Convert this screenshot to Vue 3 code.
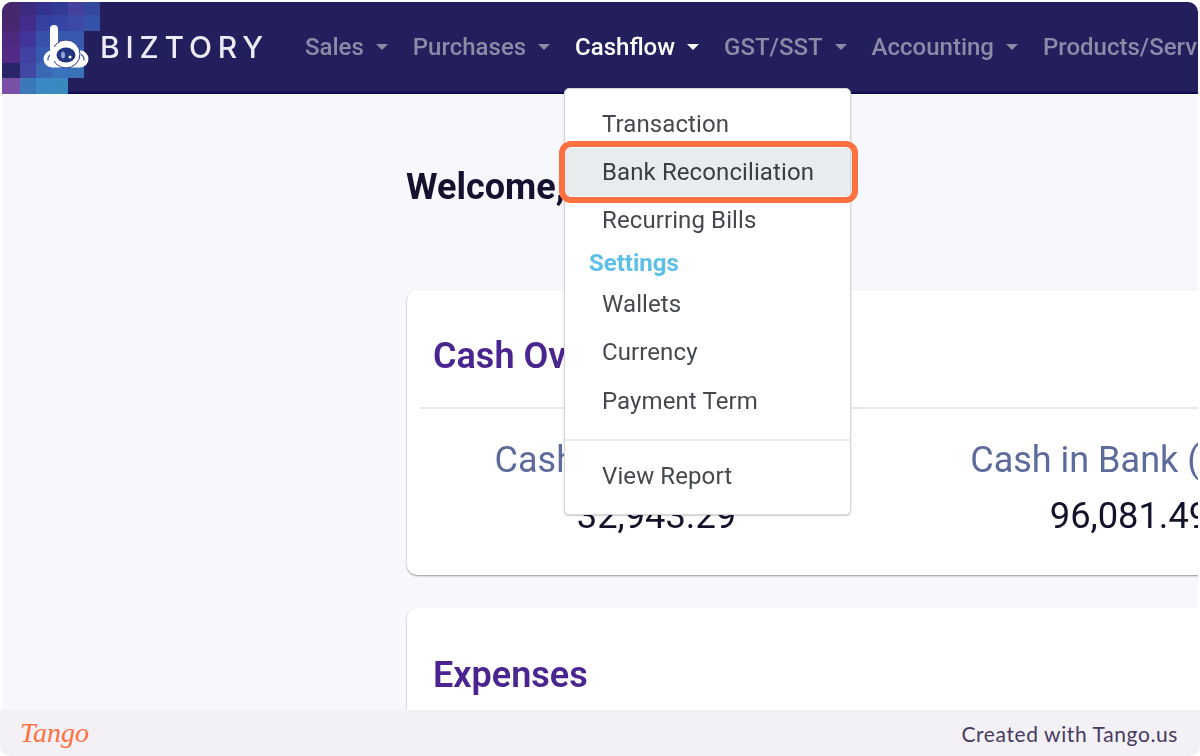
<template>
  <div class="page">
    <div class="shot">
      <header class="topbar">
        <svg class="mosaic" width="98" height="92" viewBox="0 0 98 92">
          <rect v-for="(c, i) in mosaic" :key="i" :x="c.x" :y="c.y" :width="c.w" :height="c.h" :fill="c.fill" />
        </svg>
        <div class="brand">
          <svg class="brand-icon" width="48" height="48" viewBox="0 0 48 48">
            <circle cx="10" cy="36" r="8.500" fill="#fff" />
            <circle cx="38" cy="36" r="8.500" fill="#fff" />
            <rect x="10" y="36" width="28" height="8.500" fill="#fff" />
            <path d="M6 37.500a6 6 0 0 1 3-6M42 37.500a6 6 0 0 0-3-6" fill="none" stroke="#3a4f9c" stroke-width="1.200" />
            <rect x="8" y="2" width="8" height="30" rx="4" fill="#fff" />
            <circle cx="24" cy="31" r="14" fill="#fff" stroke="#2c3a8c" stroke-width="1" />
            <rect x="8" y="24" width="8" height="14" fill="#fff" />
            <ellipse cx="24" cy="32" rx="9.500" ry="7.500" fill="#23357f" />
            <ellipse cx="21" cy="32" rx="2" ry="3.500" fill="#8fa3d8" />
            <circle cx="28" cy="34" r="1.500" fill="#fff" />
          </svg>
          <span class="brand-name">BIZTORY</span>
        </div>
        <nav class="menu">
          <a v-for="item in navItems" :key="item" class="menu-item" :class="{ active: item === 'Cashflow' }">
            {{ item }}<i class="caret"></i>
          </a>
        </nav>
      </header>

      <main class="content">
        <h1 class="welcome">Welcome,</h1>
        <section class="card overview">
          <h2 class="card-title">Cash Overview</h2>
          <div class="stats">
            <div v-for="s in stats" :key="s.label" class="stat">
              <div class="stat-label">{{ s.label }}</div>
              <div class="stat-value">{{ s.value }}</div>
            </div>
          </div>
        </section>
        <section class="card expenses">
          <h2 class="expenses-title">Expenses</h2>
        </section>
      </main>

      <div class="dropdown">
        <a class="drop-item">Transaction</a>
        <a class="drop-item selected">Bank Reconciliation</a>
        <a class="drop-item">Recurring Bills</a>
        <div class="drop-heading">Settings</div>
        <a class="drop-item">Wallets</a>
        <a class="drop-item">Currency</a>
        <a class="drop-item term">Payment Term</a>
        <div class="drop-line"></div>
        <a class="drop-item">View Report</a>
      </div>
      <div class="highlight"></div>
    </div>

    <footer class="footer">
      <span class="tango">Tango</span>
      <span class="created">Created with Tango.us</span>
    </footer>
  </div>
</template>

<script setup>
const navItems = ['Sales', 'Purchases', 'Cashflow', 'GST/SST', 'Accounting', 'Products/Services']

const stats = [
  { label: 'Cash in Hand (MYR)', value: '32,943.29' },
  { label: 'Cash in Bank (MYR)', value: '96,081.49' }
]

const colX = [0, 18, 34, 50, 66, 82]
const colW = [18, 16, 16, 16, 16, 16]
const rowY = [0, 13, 29, 45, 61, 76]
const rowH = [13, 16, 16, 16, 15, 16]
const colours = [
  ['#46286f', '#3a2a80', '#33328f', '#333a95', '#44429c', '#35479c'],
  ['#47286f', '#432c8c', '#3540a0', '#3645a4', '#3a4aa6', '#3452a8'],
  ['#4c2a80', '#41359a', '#3750a8', '#3858ae', '#3858ae', '#231f5c'],
  ['#532a88', '#3f42a0', '#375ab0', '#3862b6', '#3862b6', null],
  ['#2a2468', '#4048a4', '#3a68b4', '#3a72bc', '#3a72b8', null],
  ['#7a4fa8', '#3a78b8', '#3a88c4', '#3a88c0', null, null]
]

const mosaic = []
colours.forEach((row, r) => {
  row.forEach((fill, c) => {
    if (fill) mosaic.push({ x: colX[c], y: rowY[r], w: colW[c], h: rowH[r], fill })
  })
})
</script>

<style>
html, body {
  margin: 0;
  background: #fff;
}
</style>

<style scoped>
.page {
  width: 1200px;
  height: 756px;
  display: flex;
  flex-direction: column;
  overflow: hidden;
  font-family: Roboto, "Liberation Sans", sans-serif;
}

.shot {
  position: relative;
  flex: 1;
  min-height: 0;
  margin: 2px 2px 0;
  overflow: hidden;
  background: #f7f8fc;
  border-radius: 10px 10px 0 0;
  filter: blur(0.45px);
}

.topbar {
  position: relative;
  height: 90px;
  display: flex;
  align-items: center;
  background: #231f5c;
  border-bottom: 2px solid #0f0b50;
  white-space: nowrap;
}

.mosaic {
  position: absolute;
  left: 0;
  top: 0;
}

.brand {
  position: relative;
  display: flex;
  align-items: center;
  margin-left: 40px;
  width: 263px;
  flex: none;
}

.brand-name {
  margin-left: 10px;
  font-family: Inter, sans-serif;
  font-size: 30px;
  font-weight: 500;
  letter-spacing: 5.800px;
  color: #ecebf4;
}

.menu {
  display: flex;
  gap: 25px;
}

.menu-item {
  display: flex;
  align-items: center;
  font-size: 24px;
  font-weight: 500;
  color: #8d8aa8;
}

.menu-item.active {
  color: #fff;
}

.caret {
  margin-left: 12px;
  width: 0;
  height: 0;
  border-left: 6px solid transparent;
  border-right: 6px solid transparent;
  border-top: 6px solid currentColor;
}

.content {
  padding: 73px 0 0 405px;
}

.welcome {
  margin: 0 0 83px -1px;
  font-size: 36px;
  line-height: 40px;
  font-weight: 700;
  color: #14122e;
}

.card {
  width: 900px;
  background: #fff;
  border-radius: 10px;
  box-shadow: 0 1px 2px rgba(0, 0, 0, 0.4);
}

.overview {
  height: 285px;
  margin-bottom: 33px;
  padding-left: 13px;
  box-sizing: border-box;
}

.card-title {
  margin: 0;
  height: 119px;
  padding: 46px 0 0 13px;
  box-sizing: border-box;
  font-size: 36px;
  line-height: 40px;
  font-weight: 600;
  color: #4a2590;
  border-bottom: 2px solid #e6e8ee;
}

.expenses {
  height: 200px;
}

.expenses-title {
  margin: 0;
  padding: 47px 0 0 26px;
  font-size: 36px;
  line-height: 40px;
  font-weight: 600;
  color: #4a2590;
}

.stats {
  display: flex;
  margin-left: -1px;
  padding-top: 29px;
}

.stat {
  width: 473px;
  flex: none;
  text-align: center;
}

.stat-label {
  font-size: 36px;
  line-height: 44px;
  color: #5c6b9c;
  white-space: nowrap;
}

.stat-value {
  margin-top: 12px;
  padding-left: 2px;
  font-size: 36.300px;
  line-height: 44px;
  color: #12122a;
}

.dropdown {
  position: absolute;
  left: 562px;
  top: 86px;
  width: 287px;
  height: 427px;
  box-sizing: border-box;
  padding-top: 11px;
  background: #fff;
  border: 1px solid #d4d6da;
  border-radius: 5px;
  box-shadow: 0 1px 2px rgba(0, 0, 0, 0.2);
}

.drop-item {
  display: block;
  height: 48px;
  padding-left: 37px;
  font-size: 24px;
  line-height: 48px;
  letter-spacing: 0.100px;
  color: #45494e;
  white-space: nowrap;
}

.drop-item.selected {
  background: #e9ecef;
  color: #3a3e42;
}

.drop-item.term {
  margin-top: 1px;
}

.drop-heading {
  margin-top: -1px;
  height: 37px;
  padding-left: 24px;
  font-size: 24px;
  line-height: 40px;
  font-weight: 700;
  color: #5cc0e6;
}

.drop-line {
  margin: 14px 0 11px;
  height: 2px;
  background: #e9ecef;
}

.highlight {
  position: absolute;
  left: 557px;
  top: 139px;
  width: 299px;
  height: 62px;
  box-sizing: border-box;
  border: 6px solid #ff7040;
  border-radius: 12px;
}

.footer {
  flex: none;
  height: 46px;
  display: flex;
  align-items: center;
  justify-content: space-between;
  padding: 0 22px 0 20px;
  background: #f3f1f6;
  border-radius: 0 0 10px 10px;
}

.tango {
  font-family: "Liberation Serif", serif;
  font-style: italic;
  font-size: 28px;
  color: #ff7040;
}

.created {
  font-family: Lato, sans-serif;
  font-size: 21px;
  letter-spacing: 0.600px;
  color: #47395f;
}
</style>
